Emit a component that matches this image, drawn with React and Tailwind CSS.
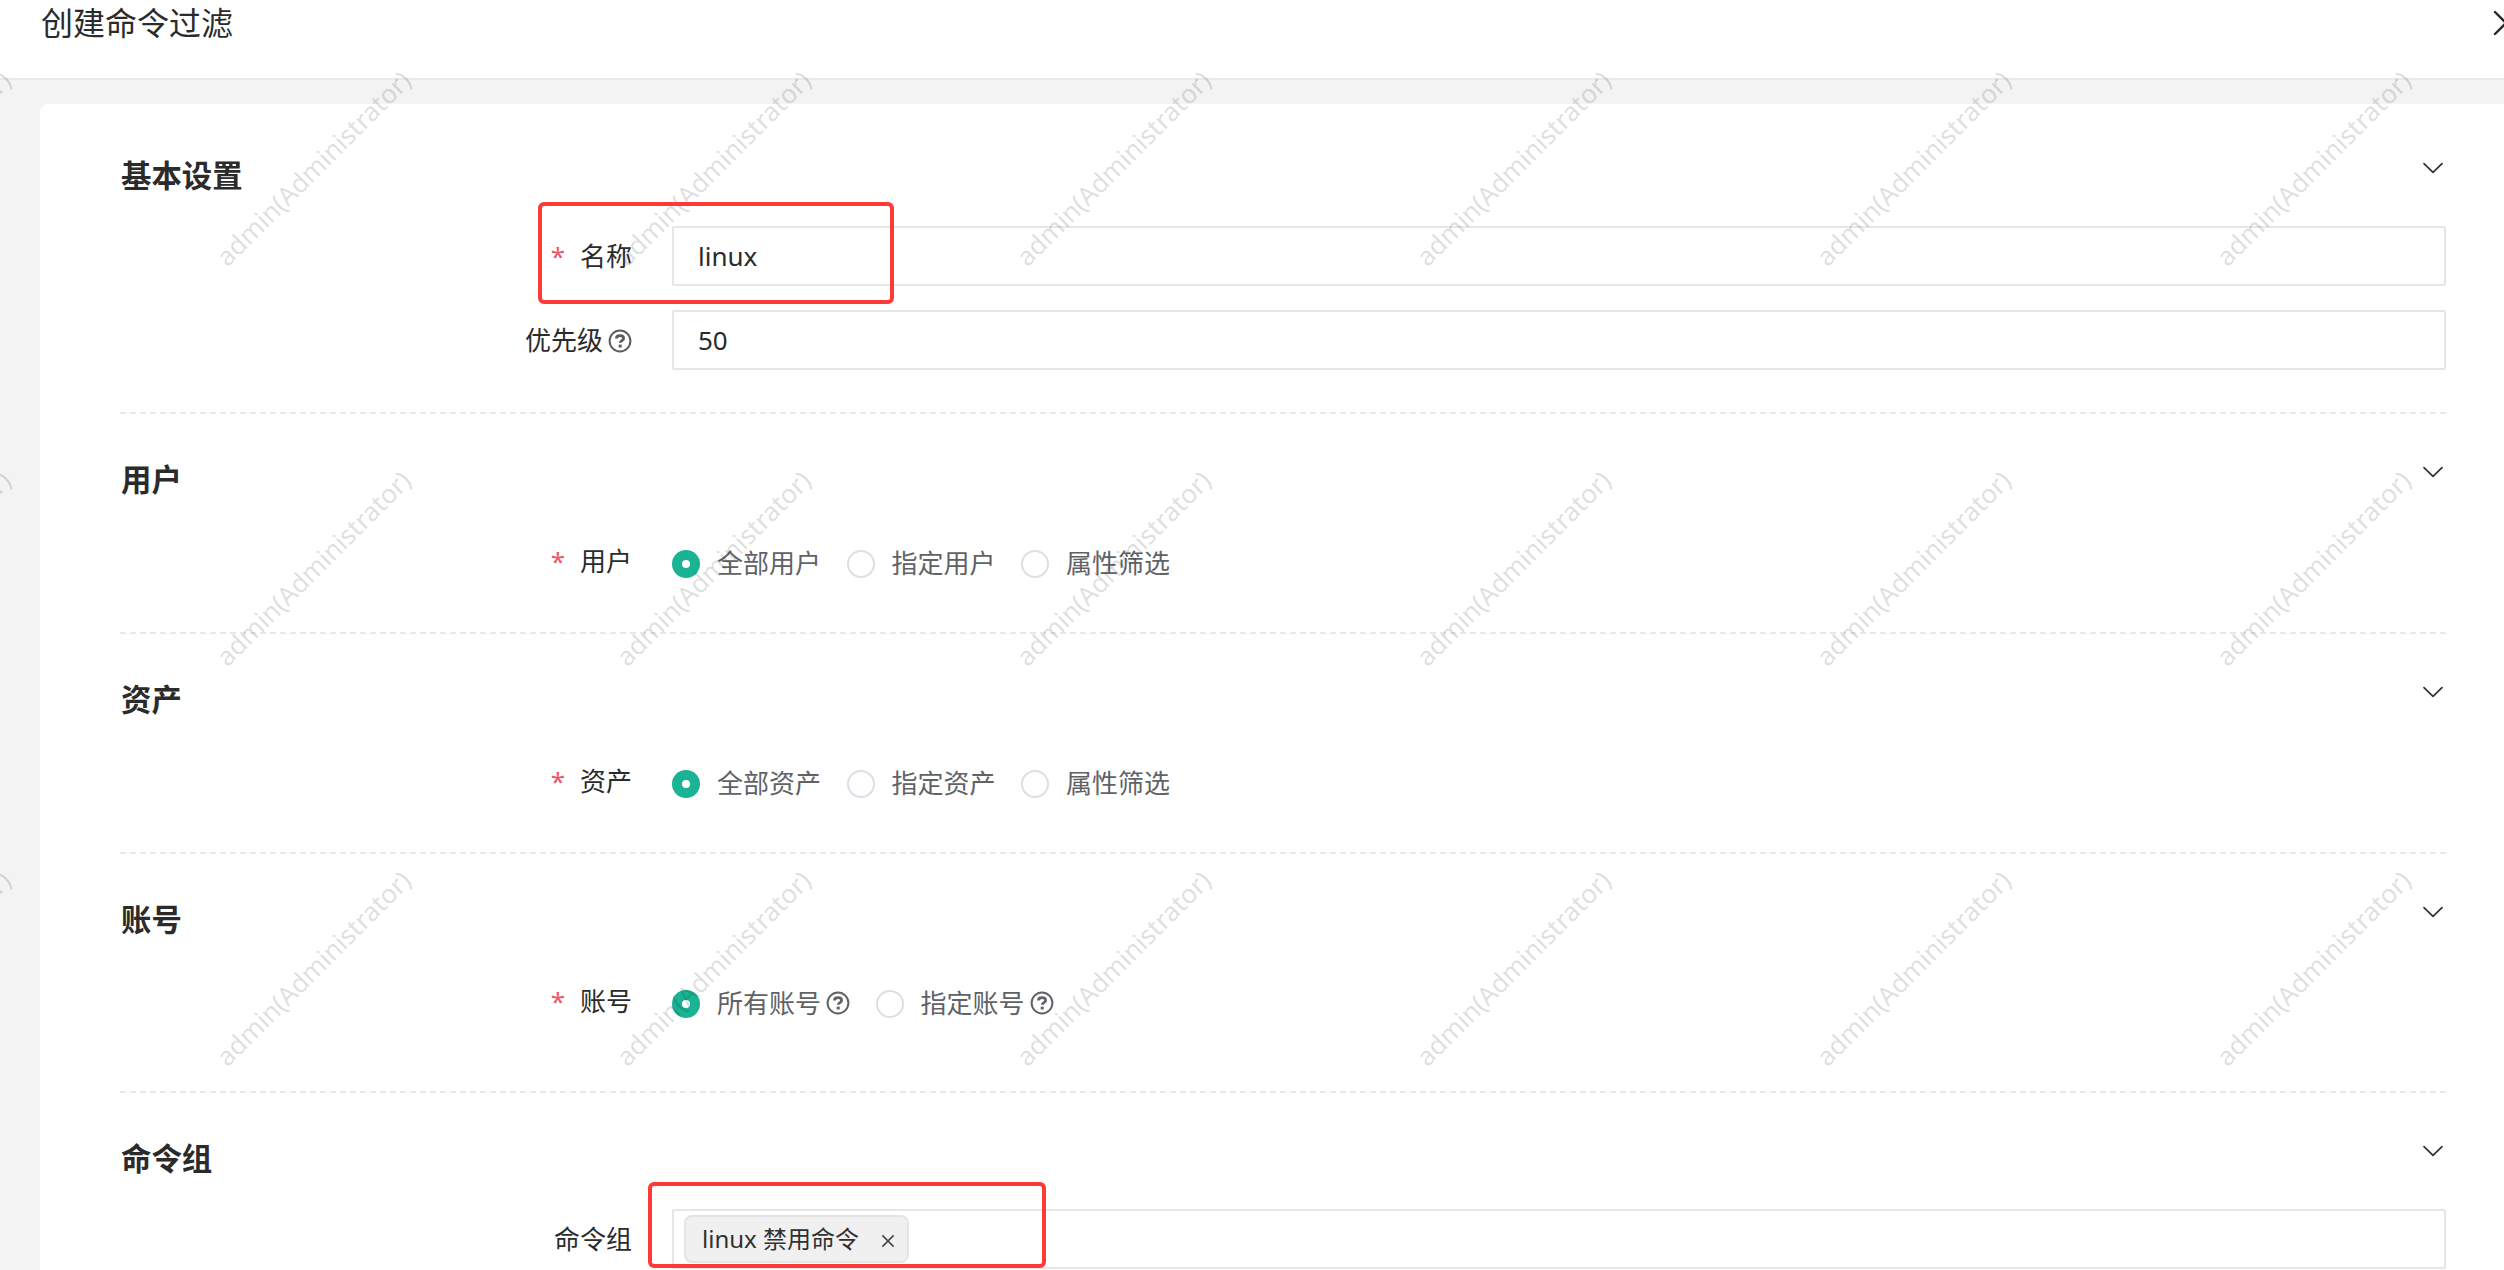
function Help() {
  return (
    <svg viewBox="0 0 24 24" className="h-6 w-6 shrink-0" fill="none" stroke="currentColor">
      <circle cx="12" cy="12" r="10.4" strokeWidth="2" />
      <path d="M8.4 9.6C8.4 7.6 9.9 6.7 12 6.7s3.6 1 3.6 2.7c0 2.1-3.4 2.2-3.4 4.4" strokeWidth="2.8" />
      <path d="M12.2 15.6v2.9" strokeWidth="3" />
    </svg>
  );
}

function Chevron() {
  return (
    <svg viewBox="0 0 24 14" className="mt-[5px] mr-px h-3.5 w-6" fill="none" stroke="#303133" strokeWidth="1.7" strokeLinecap="round" strokeLinejoin="round">
      <path d="M3 2.6 12 11.4 21 2.6" />
    </svg>
  );
}

function Section({ title, className, last, children }) {
  return (
    <section className={`flex flex-col ${last ? "" : "border-b-2 border-dashed border-[#e7eaec]"} ${className}`}>
      <div className="flex h-10 shrink-0 items-start justify-between">
        <h3 className="ml-px text-[30.4px] leading-[39px] font-bold">{title}</h3>
        <Chevron />
      </div>
      {children}
    </section>
  );
}

function Row({ label, required, help, className, labelClass = "", children }) {
  return (
    <div className={`flex shrink-0 items-center ${className}`}>
      <div className={`flex w-[512px] shrink-0 items-center justify-end text-[26px] leading-9 ${labelClass}`}>
        {required && <span className="mr-[15px] text-[#ed5565]">*</span>}
        <span>{label}</span>
        {help && <span className="relative top-px ml-[5px] text-[#5c5c5c]"><Help /></span>}
      </div>
      <div className="ml-10 min-w-0 flex-1">{children}</div>
    </div>
  );
}

function TextField({ value }) {
  return (
    <div className="flex h-[60px] items-center rounded-[2px] border-2 border-[#e5e6e7] bg-white px-6 text-[26px]">
      {value}
    </div>
  );
}

function Radios({ options, help }) {
  return (
    <div className="flex items-center gap-[25.5px] text-[26px] leading-9 text-[#606266]">
      {options.map((text, i) => (
        <div key={text} className="flex items-center">
          <span className={`flex h-7 w-7 shrink-0 items-center justify-center rounded-full ${i === 0 ? "bg-[#1ab394]" : "border-2 border-[#dcdfe6] bg-white"}`}>
            {i === 0 && <span className="h-2 w-2 rounded-full bg-white" />}
          </span>
          <span className="relative -top-px ml-[17px]">{text}</span>
          {help && <span className="relative -top-px ml-[5px]"><Help /></span>}
        </div>
      ))}
    </div>
  );
}

function Watermark() {
  return (
    <div className="pointer-events-none absolute inset-0 overflow-hidden">
      <div className="absolute -top-[32px] -left-[287px] grid grid-cols-[repeat(7,400px)] auto-rows-[400px]">
        {Array.from({ length: 21 }, (_, i) => (
          <div key={i} className="flex items-center justify-center">
            <span className="-rotate-45 text-[26px] leading-none whitespace-nowrap text-black/14">admin(Administrator)</span>
          </div>
        ))}
      </div>
    </div>
  );
}

export default function App() {
  return (
    <div className="relative flex h-[1270px] w-[2504px] flex-col overflow-hidden bg-[#f3f3f3] font-['Noto_Sans','Noto_Sans_CJK_SC',sans-serif] text-[#2b2b2b]">
      <header className="flex h-20 shrink-0 items-start justify-between border-b-2 border-[#e7eaec] bg-white pl-[41px]">
        <h1 className="text-[32px] leading-[46px]">创建命令过滤</h1>
        <svg viewBox="0 0 28 28" className="mt-[9px] -mr-4 h-7 w-7 shrink-0" fill="none" stroke="#262626" strokeWidth="2.4" strokeLinecap="round">
          <path d="M3 3 25 25M25 3 3 25" />
        </svg>
      </header>

      <main className="mt-6 ml-10 flex-1 rounded-tl-lg bg-white pr-[58px] pl-20">
        <Section title="基本设置" className="h-[310px] pt-[52px]">
          <Row label="名称" required className="mt-[30px]">
            <TextField value="linux" />
          </Row>
          <Row label="优先级" help className="mt-6">
            <TextField value="50" />
          </Row>
        </Section>
        <Section title="用户" className="h-[220px] pt-[46px]">
          <Row label="用户" required className="mt-[46px]" labelClass="relative -top-[3px]">
            <Radios options={["全部用户", "指定用户", "属性筛选"]} />
          </Row>
        </Section>
        <Section title="资产" className="h-[220px] pt-[46px]">
          <Row label="资产" required className="mt-[46px]" labelClass="relative -top-[3px]">
            <Radios options={["全部资产", "指定资产", "属性筛选"]} />
          </Row>
        </Section>
        <Section title="账号" className="h-[239px] pt-[46px]">
          <Row label="账号" required className="mt-[46px]" labelClass="relative -top-[3px]">
            <Radios options={["所有账号", "指定账号"]} help />
          </Row>
        </Section>
        <Section title="命令组" last className="h-[177px] pt-[46px]">
          <Row label="命令组" className="mt-[30px]">
            <div className="flex h-[60px] items-center rounded-[2px] border-2 border-[#e5e6e7] bg-white pl-2.5">
              <div className="flex h-12 items-center rounded-lg border-2 border-[#e4e4e4] bg-[#f0f0f0] pr-[11px] pl-4 text-[24px] text-[#303133]">
                <span>linux 禁用命令</span>
                <svg viewBox="0 0 16 16" className="mt-1 ml-[21px] h-4 w-4" fill="none" stroke="#444" strokeWidth="1.5">
                  <path d="M2.4 2.4 13.6 13.6M13.6 2.4 2.4 13.6" />
                </svg>
              </div>
            </div>
          </Row>
        </Section>
      </main>

      <Watermark />
      <div className="absolute top-[202px] left-[538px] h-[102px] w-[356px] rounded-md border-4 border-[#ff3838]" />
      <div className="absolute top-[1182px] left-[648px] h-[86px] w-[398px] rounded-md border-4 border-[#ff3838]" />
    </div>
  );
}
